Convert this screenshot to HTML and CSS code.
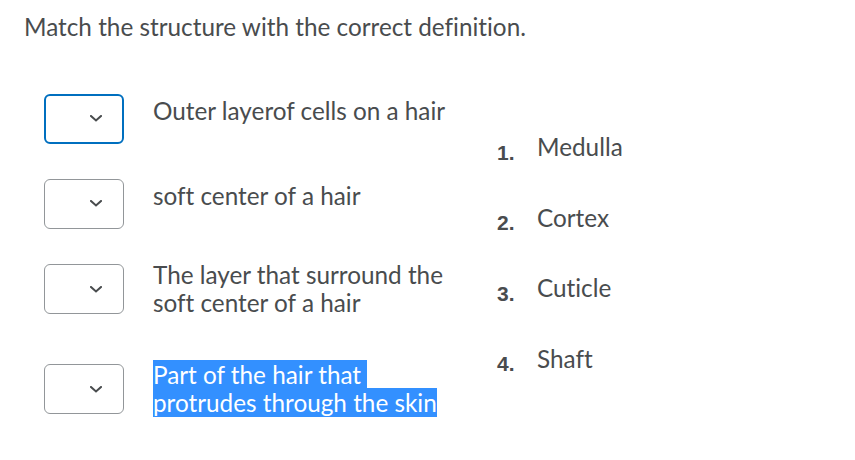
FILE: index.html
```html
<!DOCTYPE html>
<html lang="en">
<head>
<meta charset="utf-8">
<title>Matching question</title>
<link rel="stylesheet" href="styles.css">
</head>
<body>
<div class="question">
  <p class="prompt">Match the structure with the correct definition.</p>
  <div class="match">
    <div class="choices">
      <div class="row r1">
        <div class="select focused"><svg class="chev" viewBox="0 0 12 7"><path d="M1 1 L6 5.5 L11 1"/></svg></div>
        <div class="def single">Outer layerof cells on a hair</div>
      </div>
      <div class="row r2">
        <div class="select"><svg class="chev" viewBox="0 0 12 7"><path d="M1 1 L6 5.5 L11 1"/></svg></div>
        <div class="def single">soft center of a hair</div>
      </div>
      <div class="row r3">
        <div class="select"><svg class="chev" viewBox="0 0 12 7"><path d="M1 1 L6 5.5 L11 1"/></svg></div>
        <div class="def">The layer that surround the<br>soft center of a hair</div>
      </div>
      <div class="row r4">
        <div class="select"><svg class="chev" viewBox="0 0 12 7"><path d="M1 1 L6 5.5 L11 1"/></svg></div>
        <div class="def"><span class="sel">Part of the hair that&nbsp;</span><br><span class="sel">protrudes through the skin</span></div>
      </div>
    </div>
    <ol class="answers">
      <li><span class="num">1.</span>Medulla</li>
      <li><span class="num">2.</span>Cortex</li>
      <li><span class="num">3.</span>Cuticle</li>
      <li><span class="num">4.</span>Shaft</li>
    </ol>
  </div>
</div>
</body>
</html>
```

FILE: styles.css
```css
html, body {
  margin: 0;
  background: #ffffff;
}

body {
  font-family: Lato, "Open Sans", sans-serif;
  font-size: 24.3px;
  line-height: 28.4px;
  color: #494c4e;
  font-variant-ligatures: none;
}

.question {
  padding: 13px 0 0 24px;
}

.prompt {
  margin: 0;
}

.match {
  display: grid;
  grid-template-columns: 473px auto;
  margin-top: 35px;
}

.choices {
  display: flex;
  flex-direction: column;
}

.row {
  display: flex;
  align-items: center;
  height: 85px;
  padding-left: 20px;
}

.row.r3 {
  height: 86px;
}

.row.r4 {
  height: 114px;
}

.select {
  box-sizing: border-box;
  width: 80px;
  height: 50px;
  border: 1px solid #929699;
  border-radius: 6px;
  display: flex;
  align-items: center;
  justify-content: flex-end;
  padding-right: 21px;
  flex: none;
}

.select.focused {
  border: 2px solid #006fbf;
  padding-right: 20px;
}

.chev {
  width: 12px;
  height: 7px;
  fill: none;
  stroke: #494c4e;
  stroke-width: 2;
  stroke-linecap: square;
}

.def {
  margin-left: 29px;
}

.def.single {
  padding-bottom: 15px;
}

.sel {
  background: #3390ff;
  color: #ffffff;
}

.answers {
  list-style: none;
  margin: 57px 0 0 0;
  padding: 0;
}

.answers li {
  height: 70.5px;
}

.num {
  display: inline-block;
  width: 40px;
  font-family: "Liberation Sans", Arial, sans-serif;
  font-weight: bold;
  font-size: 21px;
  vertical-align: -3.5px;
}
```
